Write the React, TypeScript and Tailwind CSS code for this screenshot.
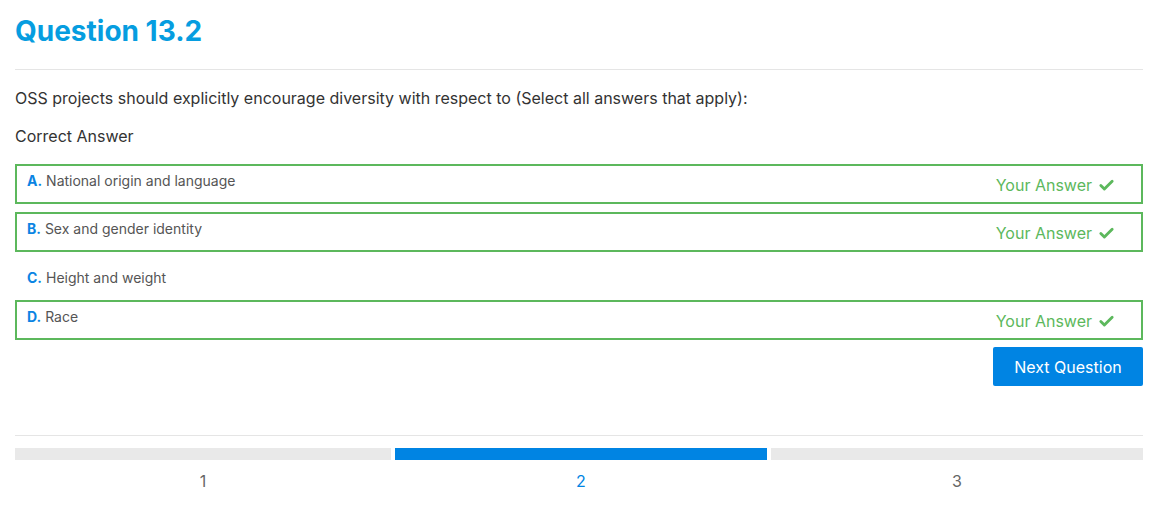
import { Check } from "lucide-react";

type Option = {
  key: string;
  text: string;
  chosen: boolean;
};

const options: Option[] = [
  { key: "A", text: "National origin and language", chosen: true },
  { key: "B", text: "Sex and gender identity", chosen: true },
  { key: "C", text: "Height and weight", chosen: false },
  { key: "D", text: "Race", chosen: true },
];

// 첫 칸만 조금 넓음
const steps = [
  { n: 1, w: "w-[376px]" },
  { n: 2, w: "w-[372px]" },
  { n: 3, w: "w-[372px]" },
];
const current = 2;

function OptionRow({ option }: { option: Option }) {
  if (!option.chosen) {
    return (
      <div className="h-[32px] mb-2 pt-2 pl-3 text-sm leading-5 text-[#555]">
        <span className="font-bold text-[#0a84e3]">{option.key}.</span> {option.text}
      </div>
    );
  }

  return (
    <div className="h-[40px] mb-2 border-2 border-[#5cb85c] flex justify-between items-start pl-[10px] pr-[26px]">
      <div className="pt-[5px] text-sm leading-5 text-[#555]">
        <span className="font-bold text-[#0a84e3]">{option.key}.</span> {option.text}
      </div>
      <div className="pt-[7px] flex items-center gap-[6px] text-base leading-6 text-[#5cb85c]">
        <span>Your Answer</span>
        <Check className="w-[17px] h-[17px]" strokeWidth={4} />
      </div>
    </div>
  );
}

export default function App() {
  return (
    <div className="bg-white w-[1156px] h-[512px] pl-[15px] pt-[12px] font-['Inter','Noto_Sans',sans-serif]">
      <div className="w-[1128px]">
        <h1 className="text-[28px] leading-[38px] font-bold text-[#069de0]">Question 13.2</h1>

        <div className="mt-[19px] border-t border-[#e5e5e5]" />

        <p className="mt-[16px] text-base leading-6 text-[#333]">
          OSS projects should explicitly encourage diversity with respect to (Select all answers that apply):
        </p>
        <p className="mt-[14px] text-base leading-6 text-[#333]">Correct Answer</p>

        {/* 선택지 목록 */}
        <div className="mt-[16px]">
          {options.map((o) => (
            <OptionRow key={o.key} option={o} />
          ))}
        </div>

        <div className="flex justify-end -mt-[1px]">
          <button className="w-[150px] h-[39px] bg-[#0084e3] text-white text-base rounded-[2px]">
            Next Question
          </button>
        </div>

        <div className="mt-[49px] border-t border-[#e5e5e5]" />

        {/* 진행 표시 */}
        <div className="mt-[12px] flex gap-1">
          {steps.map((s) => (
            <div key={s.n} className={`${s.w} flex flex-col items-center`}>
              <div className={`w-full h-[12px] ${s.n === current ? "bg-[#0084e3]" : "bg-[#e9e9e9]"}`} />
              <span className={`mt-[9px] text-base leading-6 ${s.n === current ? "text-[#0084e3]" : "text-[#666]"}`}>
                {s.n}
              </span>
            </div>
          ))}
        </div>
      </div>
    </div>
  );
}
